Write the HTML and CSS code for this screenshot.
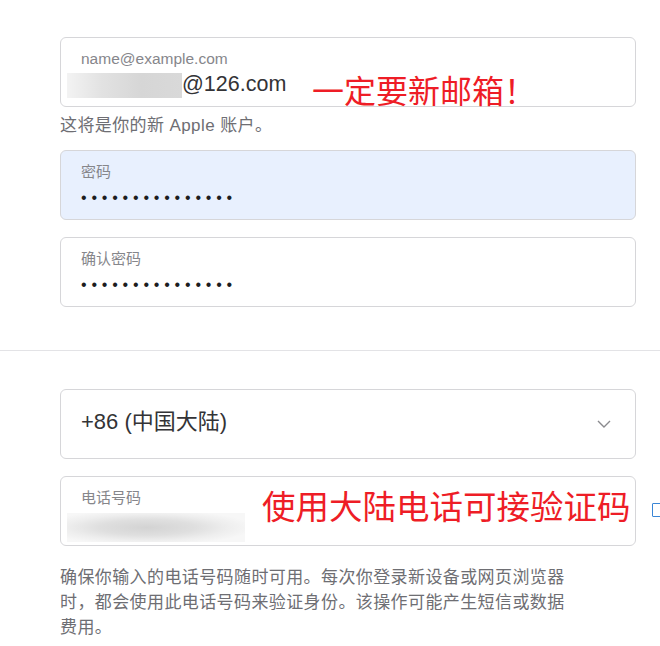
FILE: index.html
```html
<!DOCTYPE html>
<html lang="zh-CN">
<head>
<meta charset="utf-8">
<title>创建 Apple 账户</title>
<link rel="stylesheet" href="styles.css">
</head>
<body>
<main class="page">
  <section class="group group-account">
    <div class="field">
      <span class="label label-latin">name@example.com</span>
      <div class="value-row">
        <span class="redact redact-email"></span><span class="value">@126.com</span>
      </div>
      <span class="note note-email">一定要新邮箱！</span>
    </div>
    <p class="hint">这将是你的新 Apple 账户。</p>
    <div class="field field-autofill">
      <span class="label">密码</span>
      <div class="value-row"><span class="dots">•••••••••••••••</span></div>
    </div>
    <div class="field">
      <span class="label">确认密码</span>
      <div class="value-row"><span class="dots">•••••••••••••••</span></div>
    </div>
  </section>

  <hr class="divider">

  <section class="group group-phone">
    <div class="field field-select">
      <span class="select-text">+86 (中国大陆)</span>
      <svg class="chevron" width="14" height="8" viewBox="0 0 14 8" aria-hidden="true">
        <polyline points="1,1 7,7 13,1" fill="none" stroke="#8a8a8e" stroke-width="1.4"/>
      </svg>
    </div>
    <div class="field">
      <span class="label">电话号码</span>
      <div class="value-row"><span class="redact redact-phone"></span></div>
      <span class="note note-phone">使用大陆电话可接验证码</span>
    </div>
    <p class="hint hint-long">确保你输入的电话号码随时可用。每次你登录新设备或网页浏览器时，都会使用此电话号码来验证身份。该操作可能产生短信或数据费用。</p>
  </section>
  <span class="edge-box"></span>
</main>
</body>
</html>
```

FILE: styles.css
```css
* { box-sizing: border-box; }

html, body {
  margin: 0;
  padding: 0;
  background: #ffffff;
}

body {
  font-family: "Liberation Sans", "Noto Sans CJK SC", sans-serif;
  color: #1d1d1f;
}

.page {
  position: relative;
  width: 660px;
  height: 646px;
  overflow: hidden;
  padding-top: 37px;
}

.group {
  display: flex;
  flex-direction: column;
  gap: 17px;
  padding-left: 60px;
  width: 636px;
}

.field {
  position: relative;
  width: 576px;
  height: 70px;
  border: 1px solid #d6d6d9;
  border-radius: 6px;
  padding: 11px 20px 0;
  background: #ffffff;
  display: flex;
  flex-direction: column;
}

.field-autofill {
  background: #e8f0fe;
}

.label {
  display: block;
  font-size: 15px;
  line-height: 20px;
  color: #86868b;
}

.label-latin {
  font-size: 15.5px;
}

.value-row {
  display: flex;
  align-items: center;
  height: 30px;
}

.value {
  font-size: 21.5px;
  line-height: 30px;
  color: #333336;
}

.dots {
  font-size: 16px;
  letter-spacing: 4.8px;
  line-height: 30px;
  margin-top: 2px;
  color: #1d1d1f;
}

.redact {
  display: inline-block;
  margin-left: -14px;
}

.redact-email {
  width: 115px;
  height: 25px;
  margin-top: 2px;
  background: linear-gradient(90deg, #f3f3f3 0%, #e2e2e2 30%, #d6d6d6 65%, #d9d9d9 100%);
}

.redact-phone {
  width: 178px;
  height: 29px;
  margin-top: 8px;
  background: radial-gradient(ellipse 60% 60% at 45% 50%, #d3d3d3 0%, #dfdfdf 45%, #eeeeee 75%, #f7f7f7 100%);
}

.note {
  position: absolute;
  color: #ee1d26;
  font-family: "Noto Sans CJK SC", sans-serif;
  white-space: nowrap;
}

.note-email {
  left: 251px;
  top: 32px;
  font-size: 32px;
  line-height: 38px;
}

.note-phone {
  left: 201px;
  top: 7px;
  font-size: 33.5px;
  line-height: 42px;
}

.hint {
  margin: -10px 0 -5px;
  font-size: 17px;
  line-height: 24px;
  letter-spacing: 0.4px;
  color: #6e6e73;
}

.hint-long {
  margin: 2px 0 0;
  width: 512px;
  line-height: 25px;
}

.divider {
  margin: 43px 0 38px;
  border: 0;
  height: 1px;
  background: #e3e3e6;
}

.field-select {
  flex-direction: row;
  align-items: center;
  justify-content: space-between;
  padding: 0 24px 0 20px;
}

.select-text {
  font-size: 22px;
  line-height: 30px;
  margin-top: -4px;
  color: #333336;
}

.chevron {
  display: block;
}

.edge-box {
  position: absolute;
  left: 652px;
  top: 503px;
  width: 14px;
  height: 14px;
  border: 1.5px solid #3a86d6;
  border-radius: 1px;
}
```
